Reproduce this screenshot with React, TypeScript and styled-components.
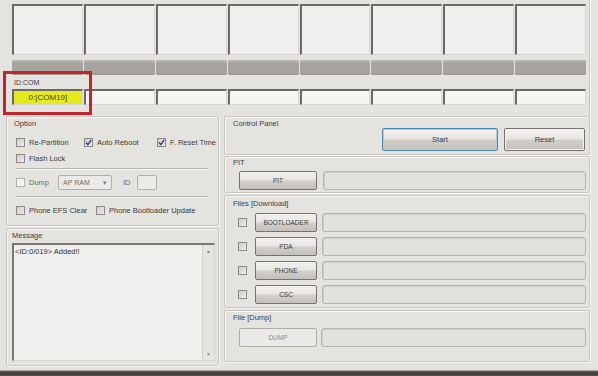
import React from "react";
import styled, { createGlobalStyle } from "styled-components";

const GlobalStyle = createGlobalStyle`
  html, body {
    margin: 0;
    padding: 0;
    background: #e5e3e0;
  }
  body {
    font-family: "Liberation Sans", Arial, sans-serif;
  }
`;

const slots = [0, 1, 2, 3, 4, 5, 6, 7];

const fileRows = ["BOOTLOADER", "PDA", "PHONE", "CSC"];

export default function App() {
  return (
    <>
      <GlobalStyle />
      <Window>
        <TopFrame>
          <SlotRow>
            {slots.map((i) => (
              <StatusBox key={i} />
            ))}
          </SlotRow>
          <SlotRow $mt={5}>
            {slots.map((i) => (
              <ProgressBar key={i} />
            ))}
          </SlotRow>
          <IdLabel>ID:COM</IdLabel>
          <SlotRow>
            {slots.map((i) => (
              <PortBox key={i} $active={i === 0}>
                {i === 0 ? "0:[COM19]" : ""}
              </PortBox>
            ))}
          </SlotRow>
        </TopFrame>

        <Annotation />

        <Lower>
          <LeftColumn>
            <OptionGroup>
              <GroupLabel>Option</GroupLabel>
              <OptionRow $mt={7}>
                <CheckItem $w={68}>
                  <CheckBox />
                  Re-Partition
                </CheckItem>
                <CheckItem $w={73}>
                  <CheckBox $checked />
                  Auto Reboot
                </CheckItem>
                <CheckItem>
                  <CheckBox $checked />
                  F. Reset Time
                </CheckItem>
              </OptionRow>
              <OptionRow $mt={4}>
                <CheckItem>
                  <CheckBox />
                  Flash Lock
                </CheckItem>
              </OptionRow>
              <Separator $mt={4} />
              <OptionRow $mt={5} $h={15}>
                <CheckItem $w={42} $disabled>
                  <CheckBox $disabled />
                  Dump
                </CheckItem>
                <Combo>
                  AP RAM
                  <ComboArrow>▾</ComboArrow>
                </Combo>
                <IdText>ID</IdText>
                <IdBox />
              </OptionRow>
              <Separator $mt={6} />
              <OptionRow $mt={6}>
                <CheckItem $w={80}>
                  <CheckBox />
                  Phone EFS Clear
                </CheckItem>
                <CheckItem>
                  <CheckBox />
                  Phone Bootloader Update
                </CheckItem>
              </OptionRow>
            </OptionGroup>

            <MessageGroup>
              <GroupLabel>Message</GroupLabel>
              <LogArea>
                <LogText>&lt;ID:0/019&gt; Added!!</LogText>
                <ScrollBar>
                  <ScrollArrow>▲</ScrollArrow>
                  <ScrollArrow>▼</ScrollArrow>
                </ScrollBar>
              </LogArea>
            </MessageGroup>
          </LeftColumn>

          <RightColumn>
            <ControlGroup>
              <GroupLabel>Control Panel</GroupLabel>
              <ControlRow>
                <ActionButton $w={116} $focused>
                  Start
                </ActionButton>
                <ActionButton $w={81}>Reset</ActionButton>
              </ControlRow>
            </ControlGroup>

            <PitGroup>
              <GroupLabel>PIT</GroupLabel>
              <FileRow $mt={3}>
                <FileButton $w={78}>PIT</FileButton>
                <PathField $ml={6} />
              </FileRow>
            </PitGroup>

            <FilesGroup>
              <GroupLabel>Files [Download]</GroupLabel>
              <FileList>
                {fileRows.map((name) => (
                  <FileRow key={name} $indent={5}>
                    <CheckBox />
                    <FileButton $w={62} $ml={8}>
                      {name}
                    </FileButton>
                    <PathField $ml={5} />
                  </FileRow>
                ))}
              </FileList>
            </FilesGroup>

            <DumpGroup>
              <GroupLabel>File [Dump]</GroupLabel>
              <FileRow $mt={5}>
                <FileButton $w={78} $disabled>
                  DUMP
                </FileButton>
                <PathField $ml={4} />
              </FileRow>
            </DumpGroup>
          </RightColumn>
        </Lower>

        <BottomEdge />
      </Window>
    </>
  );
}

const Window = styled.div`
  position: relative;
  width: 598px;
  height: 376px;
  overflow: hidden;
  background: #e5e3e0;
  color: #3d3b39;
  font-size: 8px;
  display: flex;
  flex-direction: column;
`;

const TopFrame = styled.div`
  width: 584px;
  height: 116px;
  margin-left: 6px;
  padding: 4px 0 0 6px;
  box-sizing: border-box;
  border-right: 1px solid #c8c5c1;
  box-shadow: 1px 0 0 #f6f5f3;
  flex-shrink: 0;
`;

const SlotRow = styled.div<{ $mt?: number }>`
  display: grid;
  grid-template-columns: repeat(8, 1fr);
  column-gap: 1px;
  width: 574px;
  margin-top: ${(p) => p.$mt ?? 0}px;
`;

const StatusBox = styled.div`
  height: 51px;
  box-sizing: border-box;
  background: #f1f0ee;
  border-top: 2px solid #6c6966;
  border-left: 2px solid #6c6966;
  border-right: 1px solid #d8d6d3;
  border-bottom: 1px solid #d8d6d3;
`;

const ProgressBar = styled.div`
  height: 15px;
  border-radius: 2px;
  background: #a7a39f;
  box-shadow: inset 0 2px 0 #b8b4b0, inset 0 -1px 0 #9a9692;
`;

const IdLabel = styled.div`
  height: 14px;
  padding-left: 2px;
  box-sizing: border-box;
  display: flex;
  align-items: flex-end;
  padding-bottom: 3px;
  font-size: 7px;
  color: #3d3b39;
`;

const PortBox = styled.div<{ $active?: boolean }>`
  height: 16px;
  box-sizing: border-box;
  background: ${(p) => (p.$active ? "#e4ea1b" : "#f6f5f4")};
  border-top: 2px solid #6c6966;
  border-left: 2px solid #6c6966;
  border-right: 1px solid #d8d6d3;
  border-bottom: 1px solid #d8d6d3;
  display: flex;
  align-items: center;
  justify-content: center;
  font-size: 8px;
  color: #46441c;
`;

const Annotation = styled.div`
  position: absolute;
  left: 3px;
  top: 71px;
  width: 89px;
  height: 44px;
  box-sizing: border-box;
  border: 3px solid #c3232b;
`;

const Lower = styled.div`
  display: flex;
  gap: 5px;
  height: 252px;
  padding-left: 6px;
  flex-shrink: 0;
`;

const LeftColumn = styled.div`
  width: 213px;
  display: flex;
  flex-direction: column;
  gap: 2px;
`;

const RightColumn = styled.div`
  width: 366px;
  display: flex;
  flex-direction: column;
`;

const Group = styled.div`
  box-sizing: border-box;
  border: 1px solid #cac7c3;
  border-radius: 2px;
  box-shadow: inset 1px 1px 0 #f7f6f4, 1px 1px 0 #f7f6f4;
  display: flex;
  flex-direction: column;
`;

const GroupLabel = styled.div`
  height: 10px;
  line-height: 10px;
  font-size: 7.5px;
  color: #3d3b39;
  white-space: nowrap;
`;

const OptionGroup = styled(Group)`
  height: 110px;
  padding: 2px 4px 0 9px;

  ${GroupLabel} {
    margin-left: -2px;
  }
`;

const OptionRow = styled.div<{ $mt: number; $h?: number }>`
  display: flex;
  align-items: center;
  height: ${(p) => p.$h ?? 12}px;
  margin-top: ${(p) => p.$mt}px;
`;

const CheckItem = styled.div<{ $w?: number; $disabled?: boolean }>`
  display: flex;
  align-items: center;
  gap: 4px;
  width: ${(p) => (p.$w ? `${p.$w}px` : "auto")};
  flex-shrink: 0;
  white-space: nowrap;
  font-size: 7.5px;
  color: ${(p) => (p.$disabled ? "#6e6b68" : "#3d3b39")};
`;

const CheckBoxBox = styled.span<{ $disabled?: boolean }>`
  width: 9px;
  height: 9px;
  box-sizing: border-box;
  flex-shrink: 0;
  border: 1px solid ${(p) => (p.$disabled ? "#b3b0ac" : "#8c8986")};
  background: ${(p) =>
    p.$disabled ? "#f3f2f0" : "linear-gradient(135deg, #cfccc8, #efeeec)"};
  display: flex;
  align-items: center;
  justify-content: center;
`;

function CheckBox({ $checked, $disabled }: { $checked?: boolean; $disabled?: boolean }) {
  return (
    <CheckBoxBox $disabled={$disabled}>
      {$checked && (
        <svg width="7" height="7" viewBox="0 0 7 7">
          <path d="M1 3.6 L2.9 5.6 L6.2 0.9" fill="none" stroke="#2c3b86" strokeWidth="1.4" />
        </svg>
      )}
    </CheckBoxBox>
  );
}

const Separator = styled.div<{ $mt: number }>`
  margin-top: ${(p) => p.$mt}px;
  margin-right: 5px;
  height: 1px;
  background: #b9b6b2;
  border-bottom: 1px solid #f7f6f4;
`;

const Combo = styled.div`
  width: 54px;
  height: 15px;
  box-sizing: border-box;
  border: 1px solid #b2afab;
  border-radius: 2px;
  background: #eceae8;
  display: flex;
  align-items: center;
  justify-content: space-between;
  padding: 0 4px;
  font-size: 7px;
  color: #6e6b68;
`;

const ComboArrow = styled.span`
  font-size: 7px;
  color: #7d7a77;
`;

const IdText = styled.span`
  margin-left: 11px;
  width: 14px;
  font-size: 7.5px;
  color: #6e6b68;
`;

const IdBox = styled.div`
  width: 20px;
  height: 15px;
  box-sizing: border-box;
  border: 1px solid #b2afab;
  border-radius: 2px;
  background: #eceae8;
`;

const MessageGroup = styled(Group)`
  height: 138px;
  padding: 2px 0 4px 5px;
`;

const LogArea = styled.div`
  margin-top: 2px;
  height: 119px;
  width: 203px;
  box-sizing: border-box;
  background: #f1f0ee;
  border-top: 2px solid #7a7774;
  border-left: 2px solid #7a7774;
  border-right: 1px solid #d6d4d1;
  border-bottom: 1px solid #d6d4d1;
  display: flex;
`;

const LogText = styled.div`
  flex: 1;
  padding: 2px 0 0 1px;
  font-size: 7.5px;
  color: #33312f;
  white-space: nowrap;
`;

const ScrollBar = styled.div`
  width: 11px;
  background: #e6e4e1;
  border-left: 1px solid #d4d1ce;
  display: flex;
  flex-direction: column;
  justify-content: space-between;
  align-items: center;
  padding: 3px 0;
`;

const ScrollArrow = styled.span`
  font-size: 5px;
  color: #8e8b88;
`;

const ControlGroup = styled(Group)`
  height: 39px;
  padding: 2px 4px 0 8px;
`;

const ControlRow = styled.div`
  display: flex;
  justify-content: flex-end;
  gap: 6px;
  margin-top: -1px;
`;

const buttonFace = `
  box-sizing: border-box;
  border-radius: 2px;
  display: flex;
  align-items: center;
  justify-content: center;
  color: #3a3836;
  background: linear-gradient(#f4f3f2, #e8e6e3 45%, #d2cfcb 55%, #c4c1bd);
`;

const ActionButton = styled.div<{ $w: number; $focused?: boolean }>`
  ${buttonFace}
  width: ${(p) => p.$w}px;
  height: 23px;
  font-size: 7.5px;
  border: 1px solid ${(p) => (p.$focused ? "#4f87aa" : "#75726f")};
  box-shadow: ${(p) => (p.$focused ? "inset 0 0 0 1px #a9cfe2" : "inset 0 0 0 1px #f3f2f0")};
`;

const PitGroup = styled(Group)`
  height: 37px;
  margin-top: 1px;
  padding: 1px 3px 0 8px;
`;

const FilesGroup = styled(Group)`
  height: 113px;
  margin-top: 2px;
  padding: 3px 3px 0 8px;
`;

const DumpGroup = styled(Group)`
  height: 52px;
  margin-top: 2px;
  padding: 2px 3px 0 8px;
`;

const FileList = styled.div`
  display: flex;
  flex-direction: column;
  gap: 5px;
  margin-top: 4px;
`;

const FileRow = styled.div<{ $mt?: number; $indent?: number }>`
  display: flex;
  align-items: center;
  height: 19px;
  margin-top: ${(p) => p.$mt ?? 0}px;
  padding-left: ${(p) => p.$indent ?? 6}px;
`;

const FileButton = styled.div<{ $w: number; $ml?: number; $disabled?: boolean }>`
  ${buttonFace}
  width: ${(p) => p.$w}px;
  height: 19px;
  flex-shrink: 0;
  margin-left: ${(p) => p.$ml ?? 0}px;
  font-size: 6.5px;
  border: 1px solid ${(p) => (p.$disabled ? "#b0ada9" : "#75726f")};
  ${(p) =>
    p.$disabled &&
    `
    background: #ebe9e7;
    color: #8d8a87;
  `}
`;

const PathField = styled.div<{ $ml: number }>`
  flex: 1;
  height: 19px;
  box-sizing: border-box;
  margin-left: ${(p) => p.$ml}px;
  border: 1px solid #b6b3af;
  border-radius: 3px;
  background: #e3e1de;
  box-shadow: inset 1px 1px 0 #d0cdca;
`;

const BottomEdge = styled.div`
  height: 8px;
  background: linear-gradient(#e5e3e0 0, #e5e3e0 2px, #6a6764 3px, #3a3836 5px, #55524f);
`;
